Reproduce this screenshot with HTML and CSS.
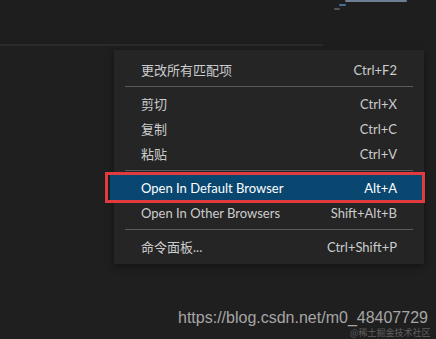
FILE: index.html
```html
<!DOCTYPE html>
<html lang="en">
<head>
    <meta charset="UTF-8">
    <title>Context Menu</title>
    <link rel="stylesheet" href="styles.css">
</head>
<body>
    <div class="editor">
        <div class="top-pane"></div>
        <div class="pane-divider"></div>
        <div class="bottom-pane"></div>
    </div>

    <div class="minimap">
        <span class="mm-line mm-a"></span>
        <span class="mm-line mm-b"></span>
        <span class="mm-line mm-c"></span>
    </div>

    <div class="menu">
        <div class="menu-item"><span class="label">更改所有匹配项</span><span class="key">Ctrl+F2</span></div>
        <div class="menu-sep"></div>
        <div class="menu-item"><span class="label">剪切</span><span class="key">Ctrl+X</span></div>
        <div class="menu-item"><span class="label">复制</span><span class="key">Ctrl+C</span></div>
        <div class="menu-item"><span class="label">粘贴</span><span class="key">Ctrl+V</span></div>
        <div class="menu-sep"></div>
        <div class="menu-item active"><span class="label">Open In Default Browser</span><span class="key">Alt+A</span></div>
        <div class="menu-item"><span class="label">Open In Other Browsers</span><span class="key">Shift+Alt+B</span></div>
        <div class="menu-sep"></div>
        <div class="menu-item"><span class="label">命令面板...</span><span class="key">Ctrl+Shift+P</span></div>
    </div>

    <div class="watermark">
        <div class="wm-url">https://blog.csdn.net/m0_48407729</div>
        <div class="wm-sub">@稀土掘金技术社区</div>
    </div>
</body>
</html>
```

FILE: styles.css
```css
body {
    margin: 0;
    background: #1e1e1e;
    font-family: Lato, 'Noto Sans CJK SC', sans-serif;
    overflow: hidden;
    height: 339px;
}
.editor {
    display: flex;
    flex-direction: column;
    height: 339px;
}
.top-pane {
    height: 44px;
    background: #1e1e1e;
}
.pane-divider {
    height: 2px;
    width: 323px;
    background: #2b2b2b;
}
.bottom-pane {
    flex: 1;
    background: #1f1f1f;
}
.minimap {
    position: absolute;
    top: 0;
    left: 333px;
    width: 80px;
    height: 12px;
}
.mm-line {
    position: absolute;
    display: block;
    height: 2px;
    border-radius: 1px;
}
.mm-a {
    left: 12px;
    top: 0;
    width: 62px;
    background: #6d7f95;
}
.mm-b {
    left: 6px;
    top: 4px;
    width: 7px;
    background: #4a6d94;
}
.mm-c {
    left: 1px;
    top: 8px;
    width: 6px;
    background: #555;
}
.menu {
    position: absolute;
    left: 114px;
    top: 50px;
    width: 310px;
    padding: 7px 0 5px;
    background: #252526;
    box-shadow: 0 2px 8px rgba(0, 0, 0, 0.45);
    color: #cccccc;
    font-size: 13px;
}
.menu-item {
    position: relative;
    display: flex;
    justify-content: space-between;
    align-items: center;
    height: 25px;
    padding: 0 27px;
}
.menu-item .label, .menu-item .key {
    position: relative;
    z-index: 1;
}
.menu-item.active {
    color: #ffffff;
}
.menu-item.active::before {
    content: '';
    position: absolute;
    top: 0;
    bottom: 0;
    left: -4px;
    right: 2px;
    background: #094771;
}
.menu-item.active::after {
    content: '';
    position: absolute;
    top: -3px;
    bottom: -3px;
    left: -9px;
    right: -1px;
    border: 3px solid #e23b3f;
    z-index: 2;
}
.menu-sep {
    height: 1px;
    margin: 4px 11px 4px 11px;
    background: #5a5a5a;
}
.watermark {
    position: absolute;
    left: 178px;
    top: 309px;
    width: 258px;
}
.wm-url {
    font-family: 'Liberation Sans', Arial, sans-serif;
    font-size: 16px;
    color: #a6a6a6;
    line-height: 18px;
}
.wm-sub {
    margin-left: 172px;
    font-family: 'Noto Sans CJK SC', sans-serif;
    font-size: 9px;
    color: #5f5f5f;
    line-height: 12px;
}
```
